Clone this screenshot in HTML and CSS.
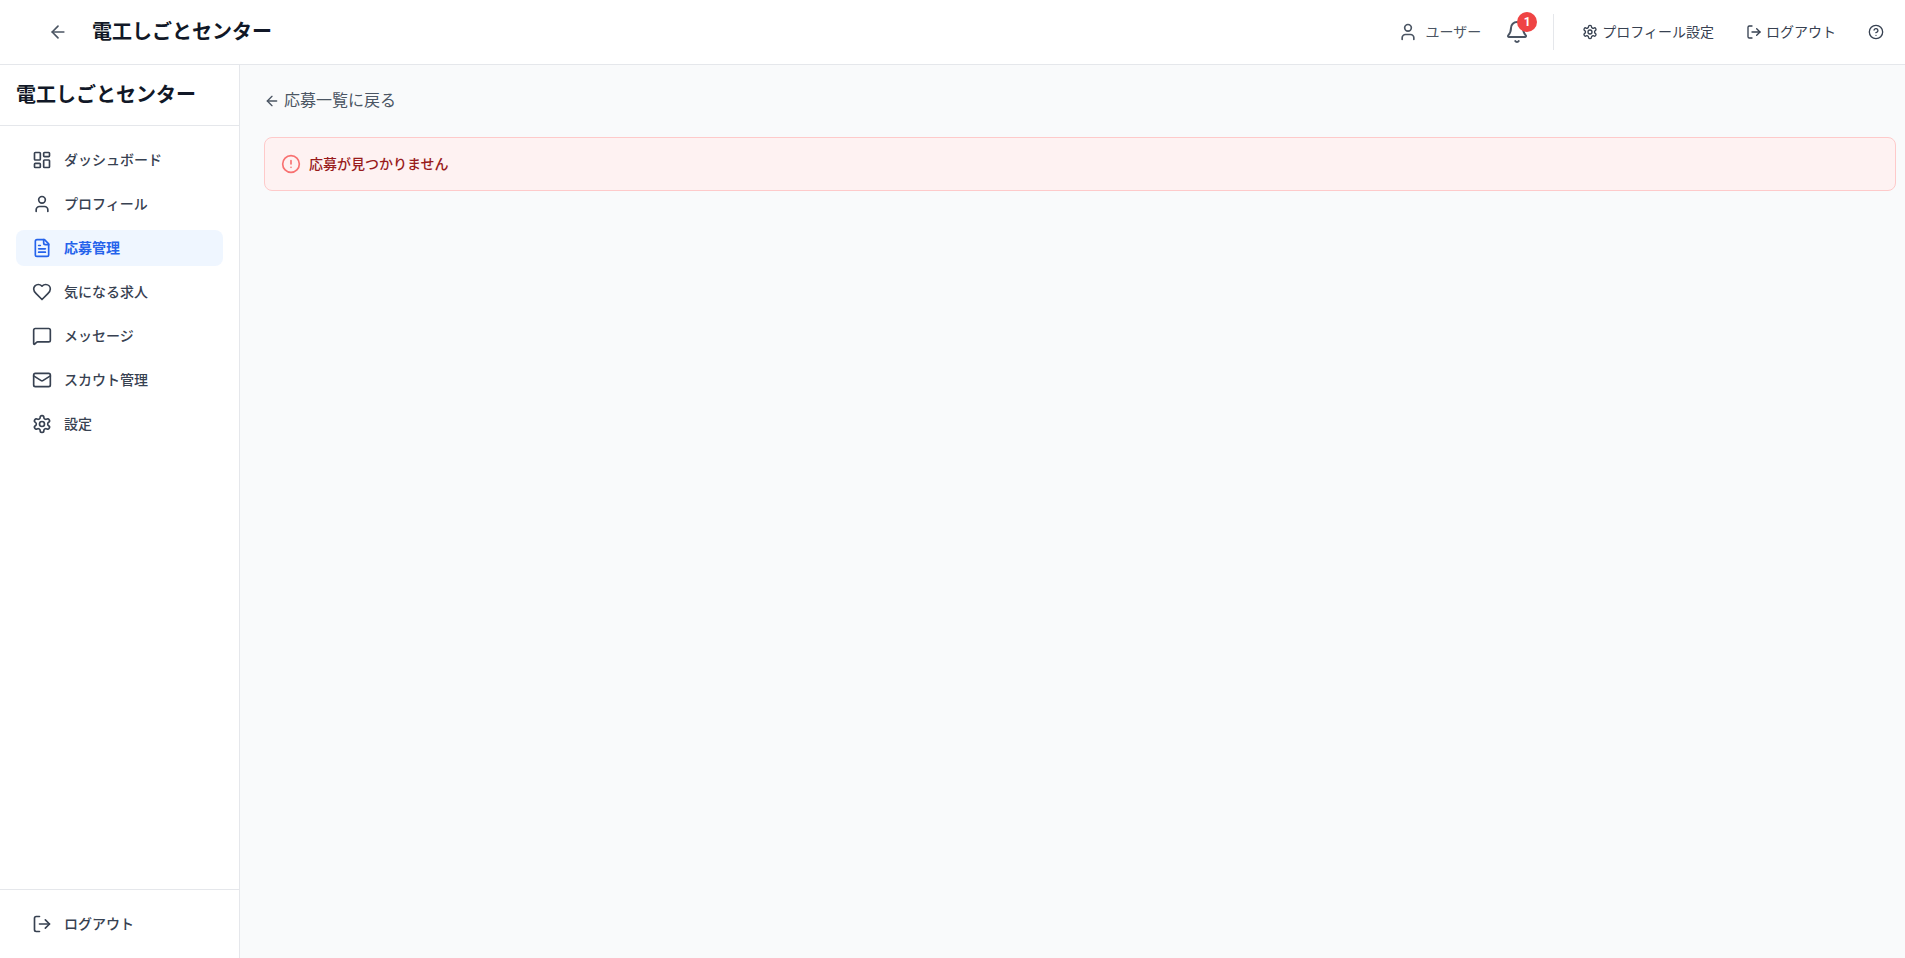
FILE: index.html
```html
<!DOCTYPE html>
<html lang="ja">

<head>
    <meta charset="UTF-8">
    <meta name="viewport" content="width=device-width, initial-scale=1.0">
    <title>電工しごとセンター</title>
    <link rel="stylesheet" href="styles.css">
</head>

<body>
    <header class="header">
        <div class="header-left">
            <button type="button" class="icon-btn" aria-label="戻る">
                <svg class="icon" viewBox="0 0 24 24"><path d="m12 19-7-7 7-7"/><path d="M19 12H5"/></svg>
            </button>
            <h1 class="title">電工しごとセンター</h1>
        </div>
        <div class="header-right">
            <div class="user">
                <svg class="icon" viewBox="0 0 24 24"><path d="M19 21v-2a4 4 0 0 0-4-4H9a4 4 0 0 0-4 4v2"/><circle cx="12" cy="7" r="4"/></svg>
                <span>ユーザー</span>
            </div>
            <button type="button" class="icon-btn bell" aria-label="通知">
                <svg class="icon icon-lg" viewBox="0 0 24 24"><path d="M10.268 21a2 2 0 0 0 3.464 0"/><path d="M3.262 15.326A1 1 0 0 0 4 17h16a1 1 0 0 0 .74-1.673C19.41 13.956 18 12.499 18 8A6 6 0 0 0 6 8c0 4.499-1.411 5.956-2.738 7.326"/></svg>
                <span class="badge">1</span>
            </button>
            <div class="header-menu">
                <button type="button" class="menu-btn">
                    <svg class="icon icon-sm" viewBox="0 0 24 24"><path d="M12.22 2h-.44a2 2 0 0 0-2 2v.18a2 2 0 0 1-1 1.73l-.43.25a2 2 0 0 1-2 0l-.15-.08a2 2 0 0 0-2.73.73l-.22.38a2 2 0 0 0 .73 2.73l.15.1a2 2 0 0 1 1 1.72v.51a2 2 0 0 1-1 1.74l-.15.09a2 2 0 0 0-.73 2.73l.22.38a2 2 0 0 0 2.73.73l.15-.08a2 2 0 0 1 2 0l.43.25a2 2 0 0 1 1 1.73V20a2 2 0 0 0 2 2h.44a2 2 0 0 0 2-2v-.18a2 2 0 0 1 1-1.73l.43-.25a2 2 0 0 1 2 0l.15.08a2 2 0 0 0 2.73-.73l.22-.39a2 2 0 0 0-.73-2.73l-.15-.08a2 2 0 0 1-1-1.74v-.5a2 2 0 0 1 1-1.74l.15-.09a2 2 0 0 0 .73-2.73l-.22-.38a2 2 0 0 0-2.73-.73l-.15.08a2 2 0 0 1-2 0l-.43-.25a2 2 0 0 1-1-1.73V4a2 2 0 0 0-2-2z"/><circle cx="12" cy="12" r="3"/></svg>
                    プロフィール設定
                </button>
                <button type="button" class="menu-btn">
                    <svg class="icon icon-sm" viewBox="0 0 24 24"><path d="m16 17 5-5-5-5"/><path d="M21 12H9"/><path d="M9 21H5a2 2 0 0 1-2-2V5a2 2 0 0 1 2-2h4"/></svg>
                    ログアウト
                </button>
                <button type="button" class="menu-btn" aria-label="ヘルプ">
                    <svg class="icon icon-sm" viewBox="0 0 24 24"><circle cx="12" cy="12" r="10"/><path d="M9.09 9a3 3 0 0 1 5.83 1c0 2-3 3-3 3"/><path d="M12 17h.01"/></svg>
                </button>
            </div>
        </div>
    </header>

    <div class="layout">
        <aside class="sidebar">
            <div class="sidebar-head">
                <h2 class="title">電工しごとセンター</h2>
            </div>
            <nav class="nav">
                <a href="#" class="nav-item">
                    <svg class="icon" viewBox="0 0 24 24"><rect width="7" height="9" x="3" y="3" rx="1"/><rect width="7" height="5" x="14" y="3" rx="1"/><rect width="7" height="9" x="14" y="12" rx="1"/><rect width="7" height="5" x="3" y="16" rx="1"/></svg>
                    ダッシュボード
                </a>
                <a href="#" class="nav-item">
                    <svg class="icon" viewBox="0 0 24 24"><path d="M19 21v-2a4 4 0 0 0-4-4H9a4 4 0 0 0-4 4v2"/><circle cx="12" cy="7" r="4"/></svg>
                    プロフィール
                </a>
                <a href="#" class="nav-item active" aria-current="page">
                    <svg class="icon" viewBox="0 0 24 24"><path d="M15 2H6a2 2 0 0 0-2 2v16a2 2 0 0 0 2 2h12a2 2 0 0 0 2-2V7Z"/><path d="M14 2v4a2 2 0 0 0 2 2h4"/><path d="M10 9H8"/><path d="M16 13H8"/><path d="M16 17H8"/></svg>
                    応募管理
                </a>
                <a href="#" class="nav-item">
                    <svg class="icon" viewBox="0 0 24 24"><path d="M19 14c1.49-1.46 3-3.21 3-5.5A5.5 5.5 0 0 0 16.5 3c-1.76 0-3 .5-4.5 2-1.5-1.5-2.74-2-4.5-2A5.5 5.5 0 0 0 2 8.5c0 2.3 1.5 4.05 3 5.5l7 7Z"/></svg>
                    気になる求人
                </a>
                <a href="#" class="nav-item">
                    <svg class="icon" viewBox="0 0 24 24"><path d="M22 17a2 2 0 0 1-2 2H6.828a2 2 0 0 0-1.414.586l-2.202 2.202A.71.71 0 0 1 2 21.286V5a2 2 0 0 1 2-2h16a2 2 0 0 1 2 2z"/></svg>
                    メッセージ
                </a>
                <a href="#" class="nav-item">
                    <svg class="icon" viewBox="0 0 24 24"><rect width="20" height="16" x="2" y="4" rx="2"/><path d="m22 7-8.991 5.727a2 2 0 0 1-2.009 0L2 7"/></svg>
                    スカウト管理
                </a>
                <a href="#" class="nav-item">
                    <svg class="icon" viewBox="0 0 24 24"><path d="M12.22 2h-.44a2 2 0 0 0-2 2v.18a2 2 0 0 1-1 1.73l-.43.25a2 2 0 0 1-2 0l-.15-.08a2 2 0 0 0-2.73.73l-.22.38a2 2 0 0 0 .73 2.73l.15.1a2 2 0 0 1 1 1.72v.51a2 2 0 0 1-1 1.74l-.15.09a2 2 0 0 0-.73 2.73l.22.38a2 2 0 0 0 2.73.73l.15-.08a2 2 0 0 1 2 0l.43.25a2 2 0 0 1 1 1.73V20a2 2 0 0 0 2 2h.44a2 2 0 0 0 2-2v-.18a2 2 0 0 1 1-1.73l.43-.25a2 2 0 0 1 2 0l.15.08a2 2 0 0 0 2.73-.73l.22-.39a2 2 0 0 0-.73-2.73l-.15-.08a2 2 0 0 1-1-1.74v-.5a2 2 0 0 1 1-1.74l.15-.09a2 2 0 0 0 .73-2.73l-.22-.38a2 2 0 0 0-2.73-.73l-.15.08a2 2 0 0 1-2 0l-.43-.25a2 2 0 0 1-1-1.73V4a2 2 0 0 0-2-2z"/><circle cx="12" cy="12" r="3"/></svg>
                    設定
                </a>
            </nav>
            <div class="sidebar-foot">
                <button type="button" class="nav-item">
                    <svg class="icon" viewBox="0 0 24 24"><path d="m16 17 5-5-5-5"/><path d="M21 12H9"/><path d="M9 21H5a2 2 0 0 1-2-2V5a2 2 0 0 1 2-2h4"/></svg>
                    ログアウト
                </button>
            </div>
        </aside>

        <main class="main">
            <a href="#" class="back-link">
                <svg class="icon icon-sm" viewBox="0 0 24 24"><path d="m12 19-7-7 7-7"/><path d="M19 12H5"/></svg>
                応募一覧に戻る
            </a>
            <div class="alert" role="alert">
                <svg class="icon" viewBox="0 0 24 24"><circle cx="12" cy="12" r="10"/><path d="M12 8v4"/><path d="M12 16h.01"/></svg>
                <p class="alert-text">応募が見つかりません</p>
            </div>
        </main>
    </div>
</body>

</html>
```
FILE: styles.css
```css
:root {
    --border: #e5e7eb;
    --gutter-right: 9px;
}

* {
    box-sizing: border-box;
}

body {
    margin: 0;
    min-height: 100vh;
    display: flex;
    flex-direction: column;
    background-color: #f9fafb;
    color: #111827;
    font-family: Roboto, "Noto Sans CJK JP", sans-serif;
    font-size: 16px;
    line-height: 24px;
}

a {
    color: inherit;
    text-decoration: none;
}

button {
    border: none;
    background: none;
    color: inherit;
    font-family: inherit;
    cursor: pointer;
}

.icon {
    width: 20px;
    height: 20px;
    flex-shrink: 0;
    fill: none;
    stroke: currentColor;
    stroke-width: 2;
    stroke-linecap: round;
    stroke-linejoin: round;
}

.icon-sm {
    width: 16px;
    height: 16px;
}

.icon-lg {
    width: 24px;
    height: 24px;
}

.title {
    margin: 0;
    color: #111827;
    font-size: 20px;
    font-weight: 700;
    line-height: 28px;
}

/* header */
.header {
    display: flex;
    align-items: center;
    justify-content: space-between;
    min-height: 65px;
    padding: 0 var(--gutter-right) 0 40px;
    background-color: #fff;
    border-bottom: 1px solid var(--border);
    color: #4b5563;
}

.header-left,
.header-right {
    display: flex;
    align-items: center;
    gap: 16px;
}

.icon-btn {
    display: flex;
    padding: 8px;
}

.bell {
    position: relative;
}

.badge {
    position: absolute;
    top: 0;
    right: 0;
    width: 20px;
    height: 20px;
    border-radius: 50%;
    background-color: #ef4444;
    color: #fff;
    font-size: 12px;
    font-weight: 700;
    line-height: 20px;
    text-align: center;
}

.user {
    display: flex;
    align-items: center;
    gap: 8px;
    font-size: 14px;
    line-height: 20px;
}

.header-menu {
    display: flex;
    align-items: center;
    gap: 8px;
    padding-left: 16px;
    border-left: 1px solid var(--border);
}

.menu-btn {
    display: flex;
    align-items: center;
    gap: 4px;
    height: 36px;
    padding: 0 12px;
    color: #374151;
    font-size: 14px;
    line-height: 20px;
}

/* sidebar */
.layout {
    flex: 1;
    display: flex;
}

.sidebar {
    display: flex;
    flex-direction: column;
    width: 240px;
    flex-shrink: 0;
    background-color: #fff;
    border-right: 1px solid var(--border);
}

.sidebar-head {
    padding: 16px;
    border-bottom: 1px solid var(--border);
}

.nav {
    flex: 1;
    display: flex;
    flex-direction: column;
    gap: 8px;
    padding: 16px;
}

.nav-item {
    display: flex;
    align-items: center;
    gap: 12px;
    width: 100%;
    padding: 8px 16px;
    border-radius: 8px;
    color: #374151;
    font-size: 14px;
    font-weight: 500;
    line-height: 20px;
}

.nav-item.active {
    background-color: #eff6ff;
    color: #2563eb;
    font-weight: 700;
}

.sidebar-foot {
    padding: 16px;
    border-top: 1px solid var(--border);
}

/* content */
.main {
    flex: 1;
    display: flex;
    flex-direction: column;
    align-items: flex-start;
    gap: 24px;
    padding: 24px var(--gutter-right) 24px 24px;
}

.back-link {
    display: flex;
    align-items: center;
    gap: 4px;
    color: #4b5563;
}

.alert {
    display: flex;
    align-items: center;
    gap: 8px;
    width: 100%;
    padding: 16px;
    border: 1px solid #fecaca;
    border-radius: 8px;
    background-color: #fef2f2;
    color: #f87171;
}

.alert-text {
    margin: 0;
    color: #991b1b;
    font-size: 14px;
    font-weight: 500;
    line-height: 20px;
}
```
